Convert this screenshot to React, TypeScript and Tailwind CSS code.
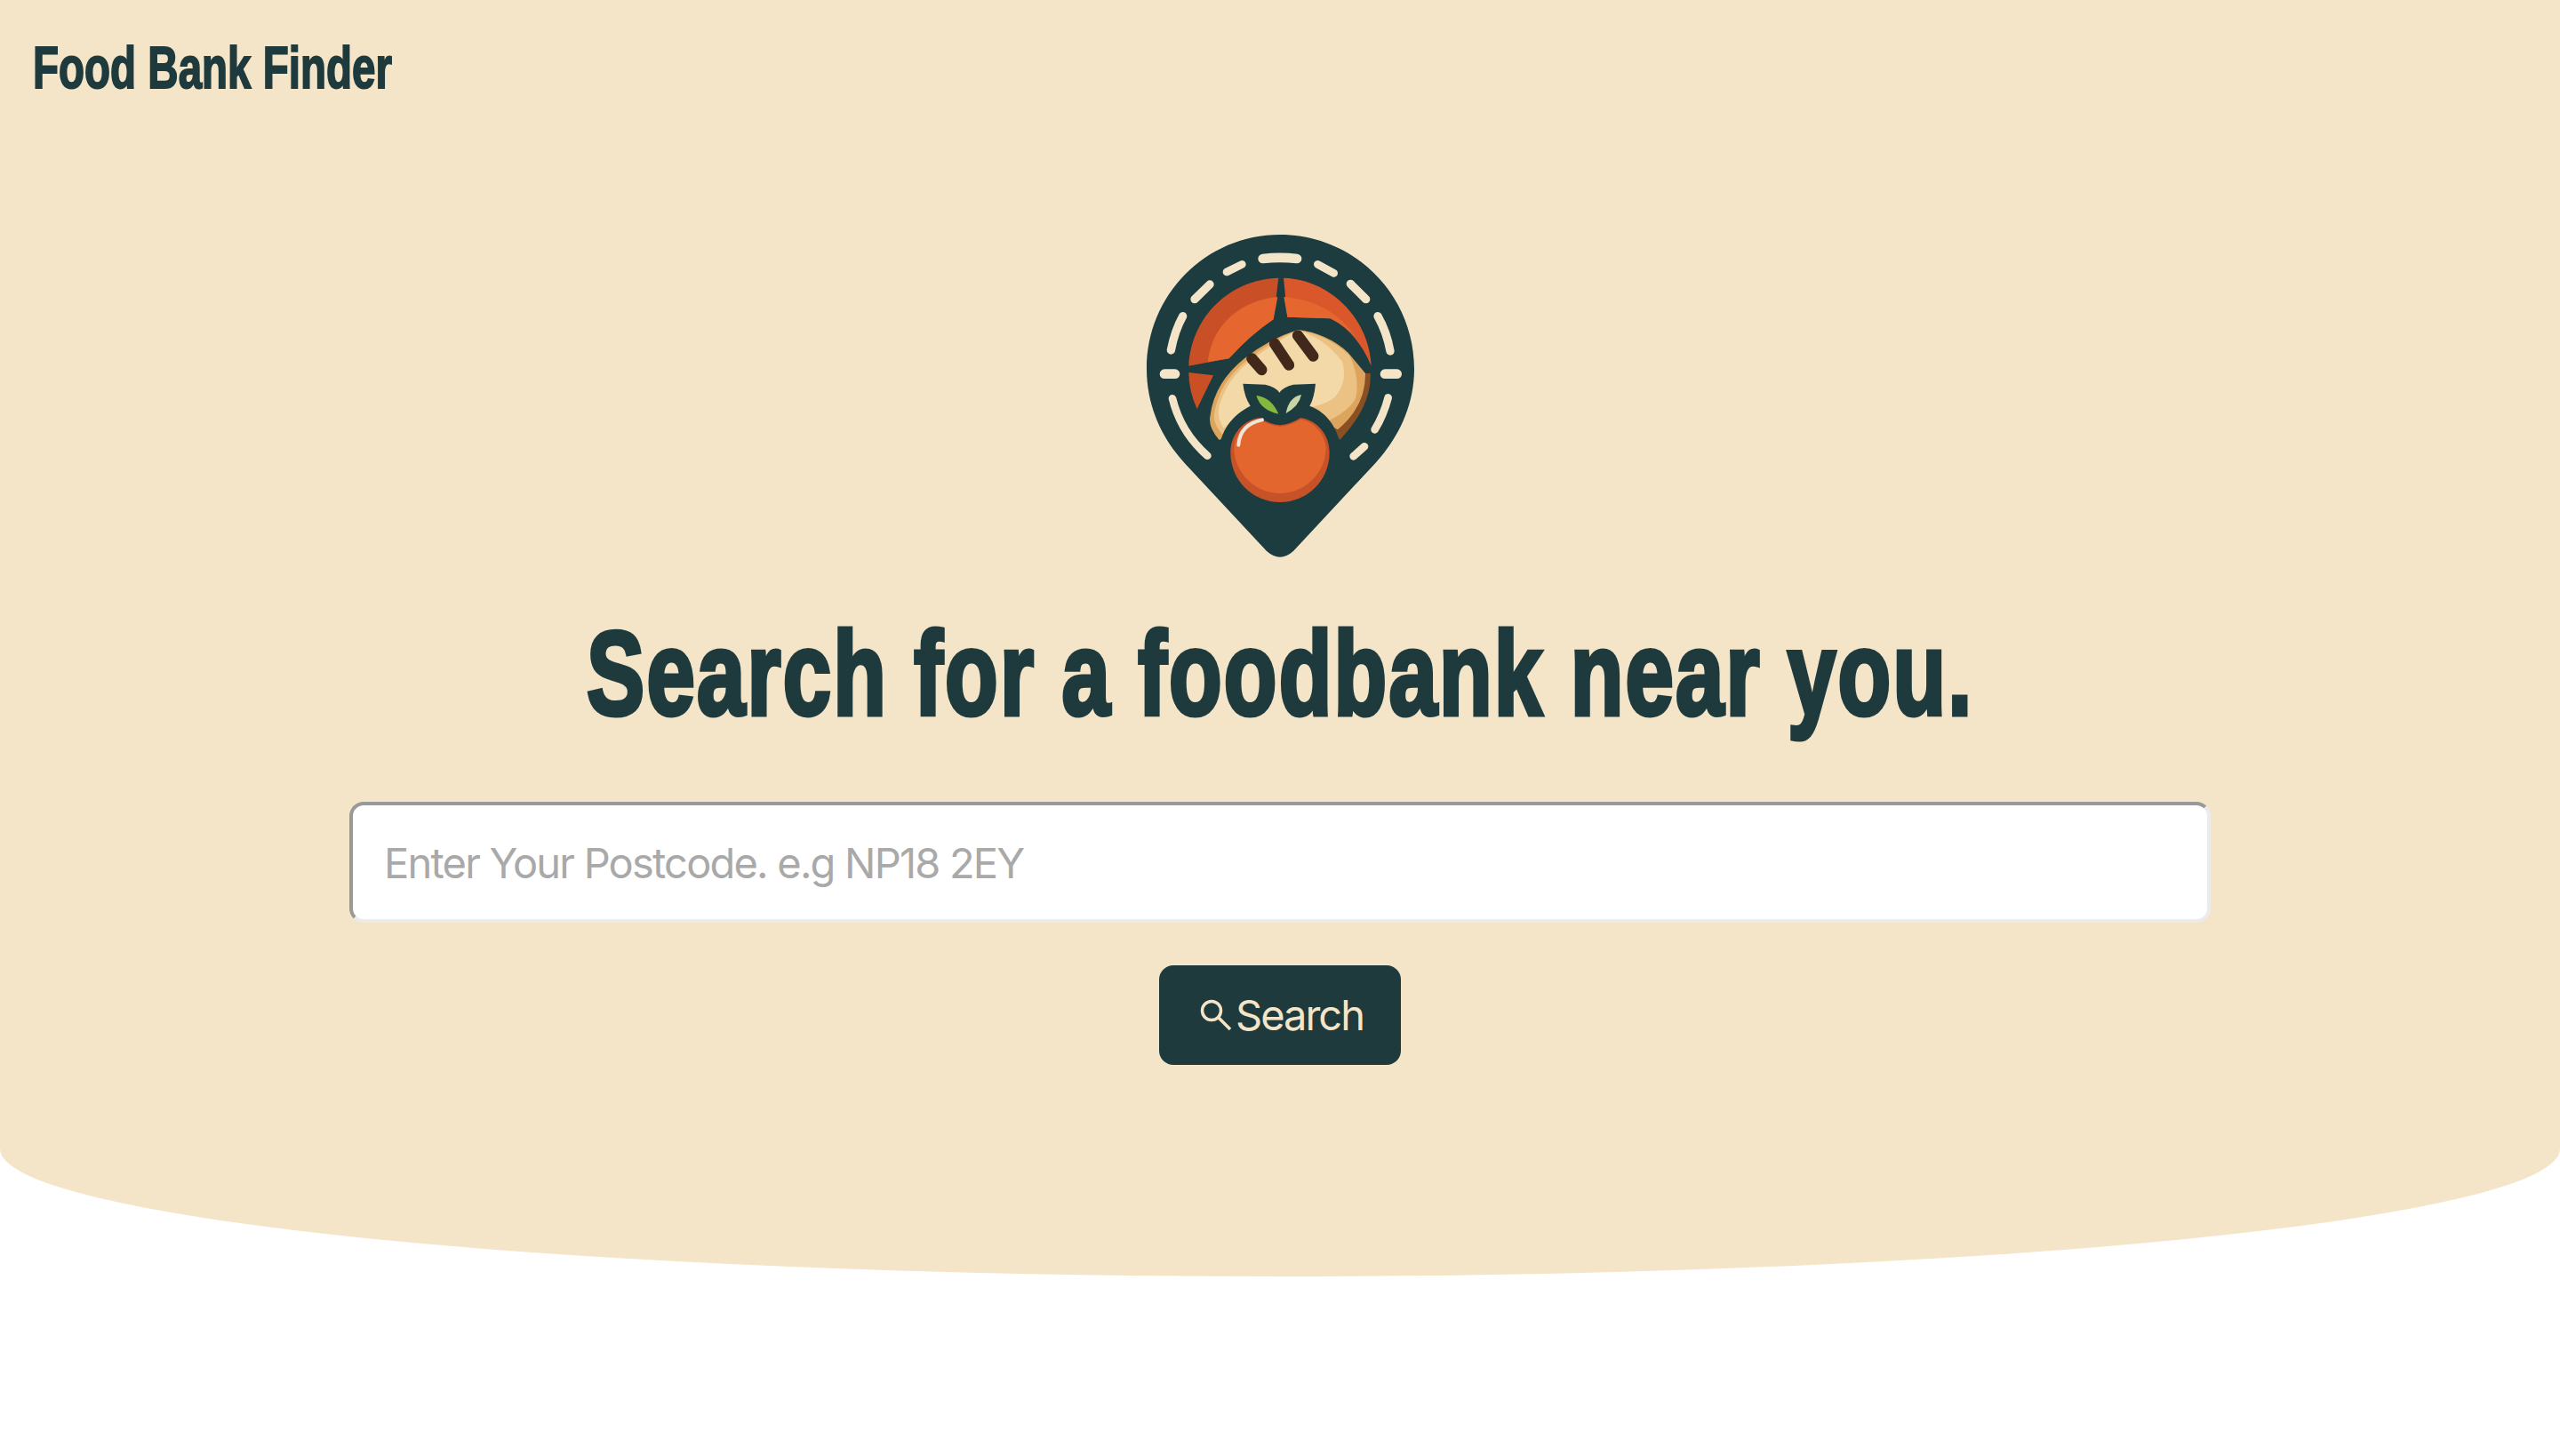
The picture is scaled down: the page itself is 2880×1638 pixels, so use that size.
const Logo = () => (
  <svg viewBox="0 0 1080 1200" className="w-[360px] h-[400px]">
    <path
      d="M540 72 C790 72 993 275 993 525 C993 660 930 770 860 845 L585 1140 Q540 1180 495 1140 L220 845 C150 770 90 660 90 525 C90 275 290 72 540 72 Z"
      fill="#1c3c40"
    />
    {/* stitched ring */}
    <g fill="none" stroke="#f5e5c8" strokeLinecap="round">
      <path d="M482 153 Q540 146 597 153" strokeWidth="32" />
      <path d="M360 198 L412 172" strokeWidth="26" />
      <path d="M252 290 L303 240" strokeWidth="28" />
      <path d="M172 462 Q185 395 212 347" strokeWidth="28" />
      <path d="M150 542 L186 542" strokeWidth="32" />
      <path d="M177 625 Q205 740 295 818" strokeWidth="26" />
      <path d="M667 172 L722 202" strokeWidth="26" />
      <path d="M778 238 L830 290" strokeWidth="28" />
      <path d="M870 347 Q900 400 912 465" strokeWidth="28" />
      <path d="M894 542 L935 542" strokeWidth="32" />
      <path d="M905 622 Q890 680 860 730" strokeWidth="26" />
      <path d="M788 820 L825 787" strokeWidth="26" />
    </g>
    {/* orange plate */}
    <path d="M535 218 C370 222 240 350 232 515 L368 490 Q440 410 518 358 Z" fill="#c94f26" />
    <path d="M532 282 C410 295 312 370 296 502 L368 490 Q440 410 518 358 Z" fill="#e5672f" />
    <path d="M552 218 C705 222 840 350 848 515 Q800 400 710 355 L565 350 Z" fill="#d9572a" />
    <path d="M553 282 C650 290 745 330 810 440 Q775 385 710 355 L565 350 Z" fill="#e5672f" />
    <path d="M232 537 L315 547 L260 660 Q232 600 232 537 Z" fill="#cb4f24" />
    {/* bread */}
    <path d="M845 540 Q850 650 742 765 L700 700 L790 540 Z" fill="#8a4f22" />
    <path d="M335 765 Q295 720 305 680 Q320 570 420 490 Q500 425 600 393 Q700 405 770 470 L828 540 Q830 650 735 730 L560 640 Z" fill="#dca45c" />
    <path d="M345 745 Q312 710 318 675 Q335 570 430 495 Q510 430 600 393 Q700 410 775 480 Q812 560 795 625 Q775 665 705 700 L560 640 Z" fill="#ecc184" />
    <path d="M350 725 Q325 690 335 650 Q360 560 440 498 Q520 435 600 395 Q690 420 750 500 Q770 570 725 620 Q695 645 640 655 L440 650 Z" fill="#f3d8a8" />
    <g fill="none" stroke="#42281b" strokeWidth="37" strokeLinecap="round">
      <path d="M445 490 L478 528" />
      <path d="M522 440 L570 512" />
      <path d="M600 412 L652 482" />
    </g>
    {/* apple */}
    <path
      d="M415 575 L490 578 Q525 585 538 605 Q552 585 585 578 L660 575 Q655 625 640 650 C700 670 745 735 745 810 C745 925 650 1010 540 1010 C430 1010 335 925 335 810 C335 735 380 680 440 650 Q420 620 415 575 Z"
      fill="#1c3c40"
    />
    <path d="M373 808 C373 750 410 700 470 690 Q505 712 540 715 Q575 712 610 690 C670 700 707 750 707 808 A167 167 0 0 1 373 808 Z" fill="#c85228" />
    <path d="M385 790 C390 745 420 705 470 695 Q505 716 540 719 Q575 716 610 695 C660 705 690 745 695 790 C695 880 620 945 540 945 C460 945 385 880 385 790 Z" fill="#e4662f" />
    <path d="M400 782 Q405 712 480 697" fill="none" stroke="#efe6d6" strokeWidth="12" strokeLinecap="round" />
    <path d="M460 615 Q510 620 535 677 Q475 665 460 615 Z" fill="#86b83f" />
    <path d="M612 612 Q570 620 560 675 Q605 650 612 612 Z" fill="#c9d6a4" />
  </svg>
);

const App = () => {
  return (
    <div className="min-h-[1638px] bg-white font-['Inter',sans-serif]">
      <div className="h-[1436px] bg-[#f5e5c8] [border-radius:0_0_50%_50%/0_0_10%_10%] flex flex-col items-center">
        <div className="w-full px-[37px] pt-[36px] h-[240px]">
          <span className="inline-block origin-left scale-x-[0.72] whitespace-nowrap font-['Liberation_Sans',sans-serif] font-bold text-[66px] leading-[80px] text-[#1e3a3d] [-webkit-text-stroke:2px_#1e3a3d]">
            Food Bank Finder
          </span>
        </div>
        <Logo />
        <h1 className="mt-[38px] h-[224px] whitespace-nowrap scale-x-[0.729] font-['Liberation_Sans',sans-serif] font-bold text-[134px] leading-[160px] tracking-[3px] text-[#1e3a3d] [-webkit-text-stroke:5px_#1e3a3d]">
          Search for a foodbank near you.
        </h1>
        <input
          placeholder="Enter Your Postcode. e.g NP18 2EY"
          className="w-[2094px] h-[136px] px-[35px] bg-white rounded-[16px] border-[4px] border-t-[#999999] border-l-[#999999] border-r-[#ebebeb] border-b-[#ebebeb] text-[47px] tracking-[-1.8px] placeholder:text-[#a9a9a9]"
        />
        <button className="mt-[48px] w-[272px] h-[112px] pl-[4px] rounded-[16px] bg-[#1e3a3d] text-[#f5e5c8] text-[47px] tracking-[-2px] flex items-center justify-center gap-[4px]">
          <svg viewBox="0 0 36 36" className="w-[36px] h-[36px]" fill="none" stroke="#f5e5c8" strokeWidth="3.5">
            <circle cx="13" cy="13" r="10.5" />
            <path d="M21 21 L34 34" />
          </svg>
          Search
        </button>
      </div>
    </div>
  );
};

export default App;
